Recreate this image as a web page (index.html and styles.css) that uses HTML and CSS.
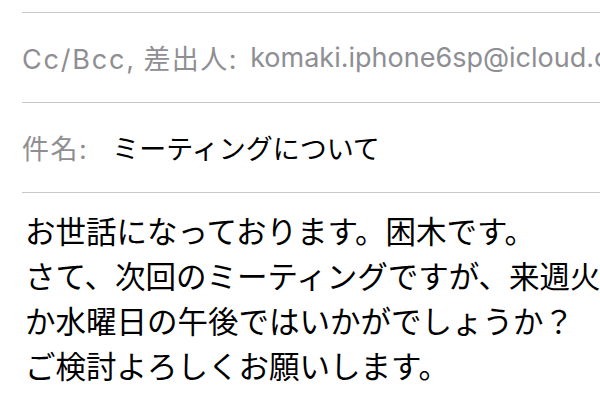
FILE: index.html
```html
<!DOCTYPE html>
<html lang="ja">
<head>
  <meta charset="UTF-8" />
  <meta name="viewport" content="width=device-width, initial-scale=1.0"/>
  <title>新規メッセージ</title>
  <link rel="stylesheet" href="styles.css">
</head>
<body>
  <div class="compose">
    <div class="field">
      <span class="label"><span class="latin">Cc/Bcc,</span> <span class="kanji">差出人:</span></span>
      <span class="value from">komaki.iphone6sp@icloud.com</span>
    </div>

    <div class="field">
      <span class="label"><span class="kanji">件名:</span></span>
      <span class="value subject">ミーティングについて</span>
    </div>

    <div class="message">
      <p>お世話になっております。困木です。</p>
      <p>さて、次回のミーティングですが、来週火曜日</p>
      <p>か水曜日の午後ではいかがでしょうか？</p>
      <p>ご検討よろしくお願いします。</p>
    </div>
  </div>
</body>
</html>
```

FILE: styles.css
```css
* {
  box-sizing: border-box;
}

body {
  margin: 0;
  background: #fff;
  font-family: Inter, "Noto Sans CJK JP", sans-serif;
  overflow: hidden;
}

.compose {
  padding-top: 12px;
}

.field {
  display: flex;
  align-items: center;
  height: 90px;
  margin-left: 22px;
  border-top: 1px solid #c8c7cc;
  font-size: 27px;
  white-space: nowrap;
  overflow: hidden;
}

.label {
  color: #8e8e93;
}

.label .latin {
  letter-spacing: 1.8px;
}

.label .kanji {
  letter-spacing: 1.5px;
}

.value {
  margin-left: 12px;
}

.from {
  color: #8e8e93;
}

.subject {
  color: #000;
  margin-left: 24px;
  font-family: "Noto Sans CJK JP", sans-serif;
  font-weight: 400;
}

.message {
  margin-left: 22px;
  border-top: 1px solid #c8c7cc;
  padding: 15px 0 0 3px;
  font-family: "Noto Sans CJK JP", sans-serif;
  font-size: 30.5px;
  line-height: 45px;
  color: #000;
  text-spacing-trim: space-all;
  white-space: nowrap;
  overflow: hidden;
}

.message p {
  margin: 0;
}
```
